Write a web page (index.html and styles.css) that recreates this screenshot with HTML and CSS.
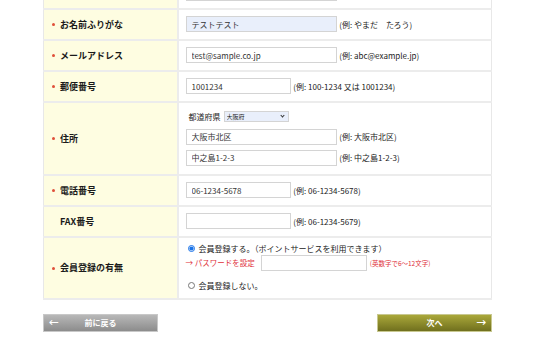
FILE: index.html
```html
<!DOCTYPE html>
<html lang="ja">
<head>
  <meta charset="UTF-8" />
  <title>お客様情報の入力</title>
  <meta name="viewport" content="width=device-width, initial-scale=1.0" />
  <link rel="stylesheet" href="styles.css">
</head>
<body>
  <div class="wrap">
    <table class="form">
      <tr class="first">
        <th></th>
        <td><input type="text" class="long filled" value=""></td>
      </tr>
      <tr>
        <th><span class="req">お名前ふりがな</span></th>
        <td><input type="text" class="long filled" value="テストテスト"> <span class="ex">(例: やまだ　たろう)</span></td>
      </tr>
      <tr>
        <th><span class="req">メールアドレス</span></th>
        <td><input type="text" class="long" value="test@sample.co.jp"> <span class="ex">(例: abc@example.jp)</span></td>
      </tr>
      <tr>
        <th><span class="req">郵便番号</span></th>
        <td><input type="text" class="short" value="1001234"> <span class="ex">(例: 100-1234 又は 1001234)</span></td>
      </tr>
      <tr>
        <th><span class="req">住所</span></th>
        <td class="addr">
          <div class="line pref">
            <span class="pref-label">都道府県</span>
            <span class="select-box">
              <select class="filled">
                <option>大阪府</option>
              </select>
            </span>
          </div>
          <div class="line"><input type="text" class="long" value="大阪市北区"> <span class="ex">(例: 大阪市北区)</span></div>
          <div class="line"><input type="text" class="long" value="中之島1-2-3"> <span class="ex">(例: 中之島1-2-3)</span></div>
        </td>
      </tr>
      <tr>
        <th><span class="req">電話番号</span></th>
        <td><input type="text" class="short" value="06-1234-5678"> <span class="ex">(例: 06-1234-5678)</span></td>
      </tr>
      <tr>
        <th><span class="opt">FAX番号</span></th>
        <td><input type="text" class="short" value=""> <span class="ex">(例: 06-1234-5679)</span></td>
      </tr>
      <tr>
        <th><span class="req">会員登録の有無</span></th>
        <td class="member">
          <label class="radio"><input type="radio" name="member" checked> 会員登録する。（ポイントサービスを利用できます）</label>
          <div class="pass">
            <span class="pass-label">→ パスワードを設定</span>
            <input type="password" class="pw">
            <span class="note">(英数字で6〜12文字)</span>
          </div>
          <label class="radio"><input type="radio" name="member"> 会員登録しない。</label>
        </td>
      </tr>
    </table>

    <div class="buttons">
      <button class="btn back"><span class="arrow">&larr;</span>前に戻る</button>
      <button class="btn next">次へ<span class="arrow">&rarr;</span></button>
    </div>
  </div>
</body>
</html>
```

FILE: styles.css
```css
* {
  box-sizing: border-box;
}

body {
  margin: 0;
  padding: 0;
  font-family: "Noto Sans CJK JP", "Liberation Sans", sans-serif;
  font-size: 8px;
  color: #222;
  background: #fff;
  overflow: hidden;
}

.wrap {
  width: 449px;
  margin: -23px 0 0 43px;
}

.form {
  width: 100%;
  border-collapse: collapse;
  border: 1px solid #e8e8e8;
}

.form tr {
  height: 31px;
  border-bottom: 2px solid #ececec;
}

.form th {
  width: 134px;
  background: #fefde1;
  border-right: 2px solid #ececec;
  text-align: left;
  font-weight: bold;
  font-size: 9px;
  color: #1a1a1a;
  padding: 0 0 0 7px;
}

.form td {
  padding: 0 0 0 7px;
  vertical-align: middle;
  white-space: nowrap;
}

.req::before {
  content: "";
  display: inline-block;
  width: 3px;
  height: 3px;
  border-radius: 50%;
  background: #e0503a;
  margin: 0 5px 1px 1px;
  vertical-align: middle;
}

.opt {
  padding-left: 9px;
}

input[type="text"],
input[type="password"] {
  height: 16px;
  border: 1px solid #d4d4d4;
  background: #fff;
  font-family: inherit;
  font-size: 8px;
  color: #333;
  padding: 0 5px;
  vertical-align: middle;
  margin: 0;
}

input.long {
  width: 151px;
}

input.short {
  width: 105px;
}

input.filled,
select.filled {
  background: #e9effb;
}

.ex {
  vertical-align: middle;
  margin-left: 1px;
}

.addr {
  padding-top: 8px !important;
  padding-bottom: 8px !important;
}

.line {
  margin-bottom: 5px;
}

.line:last-child {
  margin-bottom: 0;
}

.pref {
  display: flex;
  align-items: center;
  padding-left: 3px;
  margin-bottom: 7px;
}

.pref-label {
  margin-right: 3px;
}

.select-box {
  position: relative;
  display: inline-block;
}

.select-box::after {
  content: "";
  position: absolute;
  right: 5px;
  top: 3px;
  width: 2px;
  height: 2px;
  border-right: 1px solid #333;
  border-bottom: 1px solid #333;
  transform: rotate(45deg);
  pointer-events: none;
}

select {
  -webkit-appearance: none;
  appearance: none;
  display: block;
  width: 65px;
  height: 11px;
  font-family: inherit;
  font-size: 6px;
  line-height: 9px;
  color: #222;
  border: 1px solid #d4d4d4;
  border-radius: 0;
  padding: 0 2px;
  margin: 0;
}

.member {
  padding-top: 5px !important;
  padding-bottom: 7px !important;
}

.radio {
  display: flex;
  align-items: center;
  gap: 4px;
}

.radio input {
  width: 7px;
  height: 7px;
  margin: 0 0 0 2px;
  accent-color: #1a73e8;
}

.pass {
  display: flex;
  align-items: center;
  margin: 1px 0 9px;
}

.pass-label {
  color: #e0303a;
  font-size: 7.5px;
  margin-right: 6px;
}

input.pw {
  width: 106px;
}

.note {
  color: #e0303a;
  font-size: 6.5px;
  margin-left: 3px;
}

.buttons {
  display: flex;
  justify-content: space-between;
  margin-top: 14px;
}

.btn {
  position: relative;
  width: 115px;
  height: 18px;
  border: 1px solid #c8c8c8;
  color: #fff;
  font-family: inherit;
  font-size: 8px;
  font-weight: bold;
  text-align: center;
  padding: 0;
  cursor: pointer;
}

.btn.back {
  background: linear-gradient(#b8b8b8, #8c8c8c);
}

.btn.next {
  background: linear-gradient(#aaa83a, #70701e);
  border-color: #c8c890;
}

.btn .arrow {
  position: absolute;
  top: 0;
  font-size: 12px;
  font-weight: normal;
  line-height: 15px;
  font-family: "DejaVu Sans", sans-serif;
}

.back .arrow {
  left: 5px;
}

.next .arrow {
  right: 5px;
}
```
